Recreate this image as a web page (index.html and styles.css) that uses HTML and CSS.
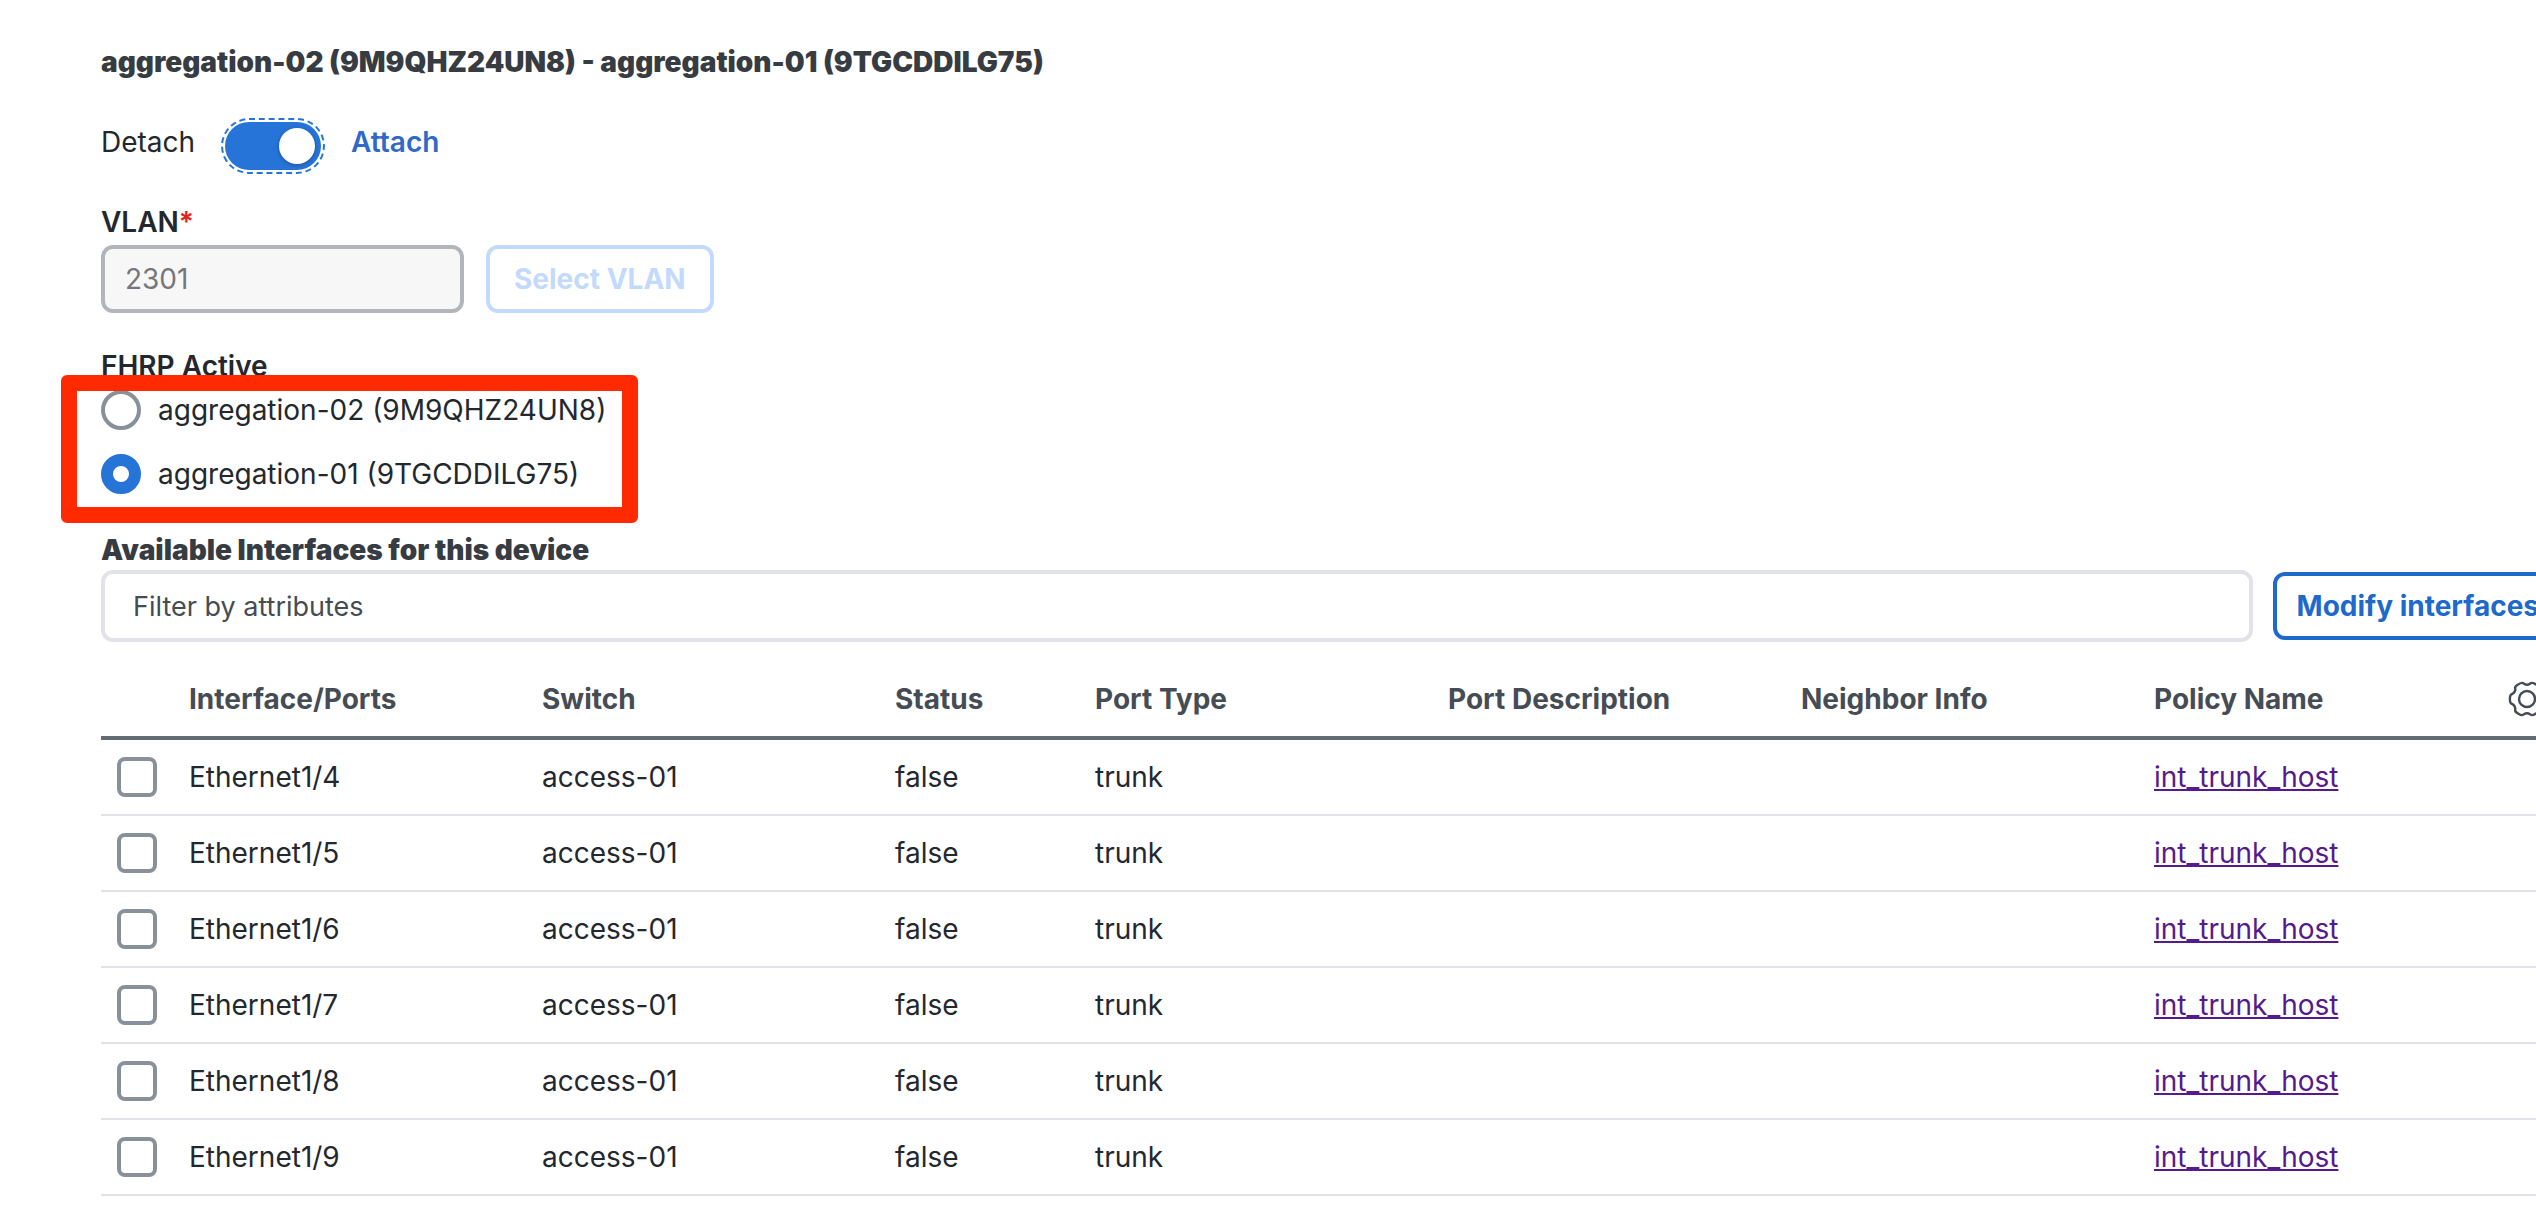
FILE: index.html
```html
<!DOCTYPE html>
<html lang="en">
<head>
	<meta charset="UTF-8">
	<title>Network Attachment</title>
	<link rel="stylesheet" href="styles.css">
</head>
<body>
	<div id="wrapper">
		<h1>aggregation-02 (9M9QHZ24UN8) - aggregation-01 (9TGCDDILG75)</h1>

		<div class="toggle-row">
			<span>Detach</span>
			<input id="attachToggle" class="toggle" type="checkbox" role="switch" checked>
			<label for="attachToggle">Attach</label>
		</div>

		<div class="vlan">
			<label class="field-label" for="vlanInput">VLAN<span class="required">*</span></label>
			<div class="vlan-row">
				<input id="vlanInput" class="text-input" type="text" value="2301" disabled>
				<button class="btn" type="button" disabled>Select VLAN</button>
			</div>
		</div>

		<fieldset class="fhrp">
			<legend class="field-label">FHRP Active</legend>
			<div class="radio-group">
				<label><input class="radio" type="radio" name="fhrp">aggregation-02 (9M9QHZ24UN8)</label>
				<label><input class="radio" type="radio" name="fhrp" checked>aggregation-01 (9TGCDDILG75)</label>
				<div class="highlight"></div>
			</div>
		</fieldset>

		<h2>Available Interfaces for this device</h2>
		<div class="filter-row">
			<input class="filter" type="text" placeholder="Filter by attributes" aria-label="Filter by attributes">
			<button class="btn" type="button">Modify interfaces</button>
		</div>

		<table>
			<colgroup>
				<col class="col-select">
				<col>
				<col>
				<col class="col-status">
				<col>
				<col>
				<col>
				<col>
				<col class="col-settings">
			</colgroup>
			<thead>
				<tr>
					<th></th>
					<th>Interface/Ports</th>
					<th>Switch</th>
					<th>Status</th>
					<th>Port Type</th>
					<th>Port Description</th>
					<th>Neighbor Info</th>
					<th>Policy Name</th>
					<th>
						<button class="settings" type="button" aria-label="Table settings">
							<svg width="40" height="40" viewBox="-20 -20 40 40" fill="none" stroke="currentColor" stroke-width="2.4">
								<path d="M14.7 -5C17.9 -4.8 17.9 4.8 14.7 5Q11.6 6.7 11.7 10.2C13.1 13.1 4.8 17.9 3 15.2Q0 13.2 -3 15.2C-4.8 17.9 -13.1 13.1 -11.7 10.2Q-11.6 6.7 -14.7 5C-17.9 4.8 -17.9 -4.8 -14.7 -5Q-11.6 -6.7 -11.7 -10.2C-13.1 -13.1 -4.8 -17.9 -3 -15.2Q0 -13.2 3 -15.2C4.8 -17.9 13.1 -13.1 11.7 -10.2Q11.6 -6.7 14.7 -5Z"/>
								<circle r="8"/>
							</svg>
						</button>
					</th>
				</tr>
			</thead>
			<tbody>
				<tr>
					<td><input class="check" type="checkbox" aria-label="Select Ethernet1/4"></td>
					<td>Ethernet1/4</td>
					<td>access-01</td>
					<td>false</td>
					<td>trunk</td>
					<td></td>
					<td></td>
					<td><a href="#">int_trunk_host</a></td>
					<td></td>
				</tr>
				<tr>
					<td><input class="check" type="checkbox" aria-label="Select Ethernet1/5"></td>
					<td>Ethernet1/5</td>
					<td>access-01</td>
					<td>false</td>
					<td>trunk</td>
					<td></td>
					<td></td>
					<td><a href="#">int_trunk_host</a></td>
					<td></td>
				</tr>
				<tr>
					<td><input class="check" type="checkbox" aria-label="Select Ethernet1/6"></td>
					<td>Ethernet1/6</td>
					<td>access-01</td>
					<td>false</td>
					<td>trunk</td>
					<td></td>
					<td></td>
					<td><a href="#">int_trunk_host</a></td>
					<td></td>
				</tr>
				<tr>
					<td><input class="check" type="checkbox" aria-label="Select Ethernet1/7"></td>
					<td>Ethernet1/7</td>
					<td>access-01</td>
					<td>false</td>
					<td>trunk</td>
					<td></td>
					<td></td>
					<td><a href="#">int_trunk_host</a></td>
					<td></td>
				</tr>
				<tr>
					<td><input class="check" type="checkbox" aria-label="Select Ethernet1/8"></td>
					<td>Ethernet1/8</td>
					<td>access-01</td>
					<td>false</td>
					<td>trunk</td>
					<td></td>
					<td></td>
					<td><a href="#">int_trunk_host</a></td>
					<td></td>
				</tr>
				<tr>
					<td><input class="check" type="checkbox" aria-label="Select Ethernet1/9"></td>
					<td>Ethernet1/9</td>
					<td>access-01</td>
					<td>false</td>
					<td>trunk</td>
					<td></td>
					<td></td>
					<td><a href="#">int_trunk_host</a></td>
					<td></td>
				</tr>
			</tbody>
		</table>
	</div>
</body>
</html>
```
FILE: styles.css
```css
* {
	box-sizing: border-box;
}
body {
	margin: 0;
	background-color: #fff;
	color: #23282e;
	font-family: Inter, sans-serif;
	font-size: 28px;
	line-height: 40px;
	overflow-x: hidden;
}
input, button {
	margin: 0;
	font: inherit;
}
h1, h2 {
	margin: 0;
	color: #373c42;
	font-size: 28px;
	font-weight: 900;
	line-height: 40px;
}
/* the panel runs past the right edge of the window */
#wrapper {
	margin-right: -35px;
	padding: 42px 0 0 101px;
}

/* attach switch */
.toggle-row {
	display: flex;
	gap: 30px;
	margin-top: 40px;
}
.toggle-row label {
	color: #3069c8;
	font-weight: 600;
}
.toggle {
	appearance: none;
	width: 96px;
	height: 48px;
	padding: 6px;
	border-radius: 24px;
	background-color: #2774d9;
	outline: 2px dashed #2774d9;
	outline-offset: 2px;
}
.toggle::before {
	content: "";
	display: block;
	width: 36px;
	height: 36px;
	border-radius: 50%;
	background-color: #fff;
	box-shadow: 0 1px 4px rgba(0, 0, 0, 0.3);
}
.toggle:checked::before {
	margin-left: auto;
}

/* form fields */
.field-label {
	display: block;
	padding: 0;
	font-weight: 600;
}
.required {
	color: #e2231a;
}
.vlan {
	margin-top: 32px;
}
.vlan-row {
	display: flex;
	gap: 22px;
	margin-top: 3px;
}
.text-input {
	width: 363px;
	height: 68px;
	padding: 0 20px;
	border: 4px solid #b2b6bb;
	border-radius: 12px;
	background-color: #f7f7f7;
	color: #75777a;
}
.btn {
	flex-shrink: 0;
	height: 68px;
	padding: 0 24px;
	border: 4px solid #1d69cc;
	border-radius: 12px;
	background-color: #fff;
	color: #1d69cc;
	font-weight: 700;
}
.filter-row .btn {
	padding: 0 20px;
}
.btn:disabled {
	border-color: #c3dafd;
	color: #c3dafd;
}

/* radios */
.fhrp {
	margin: 33px 0 0;
	padding: 0;
	border: 0;
}
.radio-group {
	position: relative;
	display: flex;
	flex-direction: column;
	gap: 24px;
	margin-top: 4px;
}
.radio-group label {
	display: flex;
	gap: 17px;
}
.radio {
	appearance: none;
	width: 40px;
	height: 40px;
	border: 4px solid #889099;
	border-radius: 50%;
}
.radio:checked {
	border: 12px solid #2774d9;
}
.highlight {
	position: absolute;
	top: -15px;
	left: -40px;
	width: 577px;
	height: 148px;
	border: 16px solid #ff2a00;
	border-radius: 6px;
	pointer-events: none;
}

/* filter bar */
h2 {
	margin-top: 36px;
}
.filter-row {
	display: flex;
	align-items: center;
	gap: 20px;
	padding-right: 8px;
}
.filter {
	flex: 1;
	height: 72px;
	padding: 0 28px;
	border: 4px solid #e1e3e8;
	border-radius: 12px;
	background-color: #fff;
	font-size: 27px;
}
.filter::placeholder {
	color: #464c54;
	opacity: 1;
}

/* interfaces table */
table {
	width: 100%;
	margin-top: 20px;
	border-collapse: separate;
	border-spacing: 0;
	table-layout: fixed;
}
.col-select {
	width: 72px;
}
.col-status {
	width: 200px;
}
.col-settings {
	width: 80px;
}
th, td {
	padding: 17px 16px;
	text-align: left;
	vertical-align: top;
	white-space: nowrap;
}
th {
	border-bottom: 4px solid #646c73;
	color: #464c54;
	font-weight: 700;
}
td {
	border-bottom: 2px solid #e1e3e8;
}
td a {
	color: #551a8b;
}
.check {
	appearance: none;
	display: block;
	width: 40px;
	height: 40px;
	border: 4px solid #889099;
	border-radius: 8px;
}
.settings {
	display: block;
	padding: 0;
	border: 0;
	background: none;
	color: #464c54;
}
.settings svg {
	display: block;
}
```
